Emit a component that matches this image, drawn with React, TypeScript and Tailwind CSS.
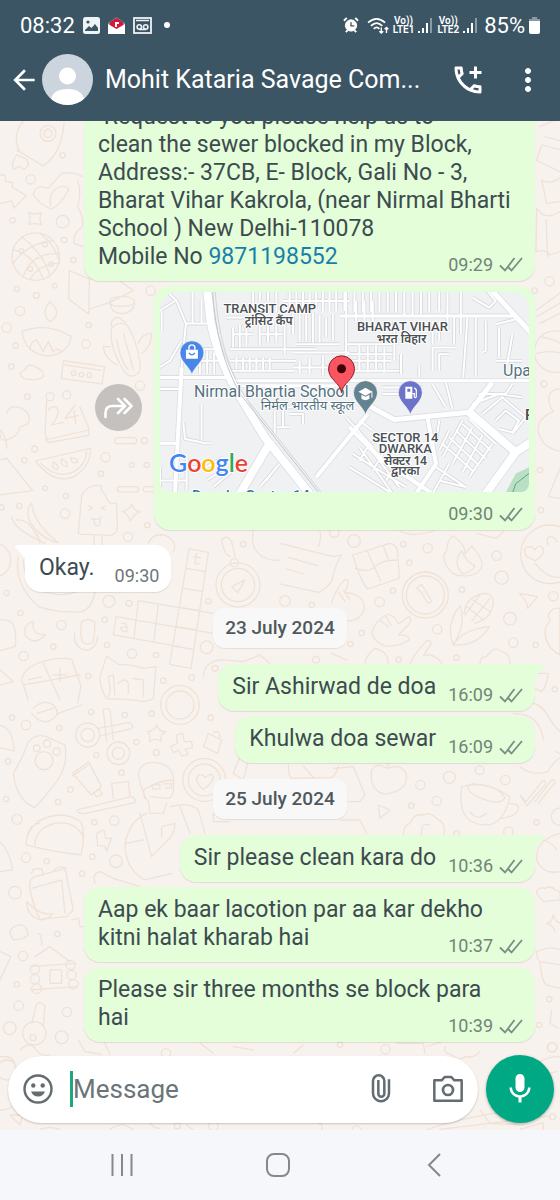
import type { ReactNode } from 'react';
import { MdArrowBack, MdMic, MdMoreVert, MdOutlineAddIcCall } from 'react-icons/md';

type Message = {
  text: string;
  time: string;
  phone?: string;
  incoming?: boolean;
  tail?: boolean;
  wide?: boolean;
};

// ===== Wallpaper =====
// each sheet is drawn at 3x and placed by its top left corner
const doodles = [
  {
    x: 0,
    y: 120,
    d: 'M60 95Q30 45 80-10M50 90L130 138Q185 100 192 10M50 105q-20 30-8 42l18-8 12 10 14-14-6-18zM0 165h15l2 20 20 2v15l42 25-38 38-5-22-36 8M100 225q5-35 45-20l40-45q40-5 62 10M100 225q20 30 55 42q25-10 52-60q-25-20-50 10q-10 15-5 40M86 278q18 8 38 0q-8 20 0 36q-20-6-38 0q8-18 0-36zM65 350Q130 400 150 468M120 340Q170 380 178 430M38 390Q100 400 130 478M40 430Q80 370 160 362M70 470Q90 400 178 400M90 478Q120 430 176 430M208 452l60 25-2 105-60-45zM268 477l72-10 60 45-70 35-60 20M330 545q0 35 38 36q35-5 36-36M330 545q0-15 36-15t38 15q0 12-38 14t-36-14zM66 635q75-30 148 15q-10 55-75 58q-65-10-73-73zM150 605q-30-25 0-60q40 35 0 60zM90 690q0-25 20-30l20 35 15-30 15 30q15-15 22 0M335 625q-10 50 35 125q10 20 30 18q25-5 20-40q-10-70-40-115q-30-10-45 12zM330 680h-20q0 30 40 55M425 700q30-20 30-60q-30 0-40 30M335 620q-5-20 15-28q10 0 25 15M350 660q10 60 35 90M370 640q15 50 30 110M190 722l124 18-8 52-122-16zM195 735l108 16M70 775q-20-15 5-25q10-25 32-8q25 5 22 28q-15 15-59 5zM232 180q15 40 0 80q20 30 15 60q-30 20-25 50l28 10',
    c: [[144, 40, 24], [144, 40, 12], [107, 410, 71], [64, 393, 7], [135, 374, 7], [153, 433, 7], [91, 447, 7], [38, 301, 8], [188, 305, 19], [192, 360, 8], [220, 420, 8], [92, 178, 14], [187, 106, 8], [164, 497, 7], [109, 526, 9], [60, 573, 14], [20, 623, 14], [47, 677, 8], [266, 616, 8], [258, 672, 13], [452, 512, 14], [34, 740, 8], [82, 830, 8], [420, 797, 14], [51, 507, 8], [221, 760, 7], [244, 764, 7], [268, 766, 7], [150, 830, 12], [200, 825, 12]],
  },
  {
    x: 0,
    y: 400,
    d: 'M140 0l-5 100 10 28 122-22-2-25-25-60M135 120l130-30M145 30q20-20 30 0q0 20-20 45l35-8M225 15l-30 40 40-8M222 30l5 40M20 40q10-30 45-15q30 15 20 45q-20 10-25 10q-5 30-35 38q-25 10-25-20M0 90q20 20 20 55M0 285L98 272 20 175 0 180M106 183L272 145q0 55-50 85q-60 25-116-47zM122 190q50 50 100 25q35-20 38-60M160 185q-8 20 12 24q8-10-12-24zM185 177q-5 22 15 22q8-10-15-22zM212 172q0 20 20 15q5-10-20-15zM235 400q5-60 10-115q20-35 60-28q-5 15 10 25q5 20 20 30q10-5 15 0l2 70q0 20-20 24l-75-3q-20 0-22-3zM282 408v30M306 408v30M265 318l12 5-10 8M318 318l-14 5 12 8M275 355q15 8 30-3M282 358q0 20 10 20q10 0 8-22M353 113h48a9 9 0 0 1 0 18h-48a9 9 0 0 1 0-18zM360 260h48a8 8 0 0 1 0 16h-48a8 8 0 0 1 0-16zM460 260h-22a8 8 0 0 0 0 16h22M395 312q5 20 26 24q-20 5-30 28q-5-20-24-30q22-3 28-22zM95 310q5 60 80 118q-50-10-85-60q-15-40 5-58zM35 350q5 30 60 60q30 15 40 20M50 360q30-5 50 30q20 25 20 40M55 470q-15 80 60 150q60 20 130 15q30-10 40-58M70 480q0 60 50 90q60 25 110 5M567 447l58 10-52 348-64-12zM558 505l58 10M549 565l58 9M540 622l60 10M528 680l60 10M518 738l60 10M415 602L640 640M348 650L640 700M340 705l200 35M415 602L402 715M475 612l-14 115M348 650l-8 55M580 470l22 4M590 460l-5 30q5 5 12 0M365 670q20-5 15 25q-20 0-18-12l18-2M690 470q-20-10-25-50q15-20 30 5q8 30 10 45M695 560l40-20-22 38zM760 390q-10 50 20 75q30 20 60 15M445 430q10-30 50-25q40 20 25 50M100 665q-30 5-25 40q25 35 62 0q-45 0-37-40zM245 665q20-12 38 0q5 10-4 60q-15 15-32 0q-8-20-2-60zM224 700q-5 40 30 50q30 5 40-40M0 660q40-5 45 30q5 40 0 50l-45 12M65 840q5-45 90-62q40-5 60 0l28 80-10 50M65 840l20 60M130 790l50 110M70 855q60-10 170-30M160 825h40M180 805v40M85 840l40-10M300 830l20-62 35 25q40 0 75 12l38-5-8 95q-20 15-60 5l-80-4q-20-30-20-66zM325 830q10 50 0 60M325 830l15-5 5 60M355 850q20-20 30 0v30M400 835l30 5v50M610 830q5-50 60-50l60 5 50-20 30 25M0 810l40 35-40 10',
    c: [[714, 555, 66], [714, 555, 50], [703, 488, 12], [104, 147, 9], [73, 181, 8], [317, 172, 14], [395, 195, 7], [303, 221, 8], [433, 122, 9], [440, 195, 8], [135, 265, 7], [198, 288, 8], [5, 322, 8], [58, 318, 8], [195, 341, 14], [442, 376, 8], [384, 411, 14], [20, 579, 8], [327, 604, 18], [387, 610, 9], [61, 639, 8], [314, 659, 8], [184, 675, 14], [321, 735, 8], [396, 761, 14], [468, 765, 8], [71, 768, 14], [265, 828, 8], [625, 604, 8], [620, 742, 19], [730, 433, 8], [160, 740, 8], [490, 842, 8], [575, 833, 8], [645, 805, 9], [-20, 480, 52]],
  },
  {
    x: 280,
    y: 520,
    d: 'M0 70l160 40 25-5q-20 30-30 80q-20 25-40 32l-115-25M25 112l88 25M18 147l54 15M120 35q5 20-5 45M218 105l110-35q20 0 25 25l5 80-95 32q-20-20-45-102zM225 145q40 15 60-5t65-20M262 93l40 90M310 78l15 40M410 205l15-12 30 50q-5 8-12 5l-20-32zM520 375q-25-60 20-118q20 55-20 118q25-45 108-55q-35 60-108 55zM552 280q5-50 60-60q30 0 28 30q-5 45-55 60M560 260l50 40M580 240l50 35M600 225l-45 60M630 235l-55 68M500 95q0-35 20-48q40 30 35 55l20-25q40 50 30 65q-15 30-60 25q-35 0-52-45q-5-25 7-27zM545 92q-30 40 5 70q30-10 35-25q-25-10-40-45M740 110q-15-25 5-30q15 0 20 10q10-20 25-5q5 20-25 37zM805 75q-10-20 5-25q15 0 20 15M765 130q50 60 90 35M718 220l55 10-30 35q0-20-25-45zM155 250q10-40 40-72q10 0 10 10l-10 30q30 0 50 20q15 30 0 45q-20 25-50 18M175 215l20 30M190 210l20 30M275 340q10-40 50-58q20 5 30 30l30-22q15 5 0 25l-30 30q35 0 33 15q-30 20-70 18q-30-5-43-38zM300 300l25 20M318 290l15 25M795 340q0-25 15-35l-5-20q10-25 35-20v140q-40-20-45-65zM600 430q0-20 20-20q20-35 45-15q25 5 25 35M390 430q15-30 50-68q20 0 10 15l-20 30q30-10 55 22M255 430q0-20 30-45q40 10 40 45M155 400l45 20M360 33q40 20 100 0M590 40l60 15 20-20M730 550q50-10 75 40q30 50 60 60M700 580q80 0 90 80M770 460h35q-5 40-20 55l-20-10M720 740q40 30 85 15q10-30 50-50l-30-10M320 745q-30-20-45 5q-8 50 25 68q20 8 35 0q45-10 45-50q-10-40-60-23zM320 745q0-8 8-15M25 735q0 35 10 40l120-2q15-10 20-35M70 738l30 35M160 745l60-5 35 85-15 20h-40M545 800q70-20 145 30q-20 90-80 85q-80-5-65-115zM565 808q-10-20 30-15q60 5 80 40q-10 20-50 10q-50-15-60-35M690 850q30 0 25 20q-10 20-50 25M570 875q20 30 50 5M720 825l18 20 50-62q12 0 8 10l-55 65zM765 845l50-65q12 0 10 8l-50 62M295 855l35 15-30 25z',
    c: [[436, 225, 69], [436, 225, 57], [810, 103, 88], [222, 63, 19], [370, 73, 8], [443, 85, 14], [388, 128, 8], [650, 107, 14], [665, 173, 20], [546, 209, 8], [299, 246, 14], [339, 212, 8], [15, 243, 16], [95, 255, 8], [690, 296, 19], [820, 229, 14], [245, 339, 8], [472, 328, 14], [211, 372, 8], [700, 368, 14], [767, 375, 8], [108, 419, 10], [529, 413, 8], [356, 419, 8], [824, 508, 8], [421, 795, 14], [508, 772, 18], [599, 751, 13], [676, 780, 14], [470, 843, 14], [394, 857, 8], [163, 38, 14]],
  },
  {
    x: 0,
    y: 700,
    d: 'M295 85l90-17q20 5 10 18l-95 22M310 30q10-10 20 0l10 90M310 30l10 95M95 40q40 50 80 0l70-25M100 25q30-30 60-10q15 15 10 30M110 40l50-15M470 75q5 20 28 20q-20 10-15 28q-20-10-35 2q5-18-5-30q20-3 27-20zM530 105l18-5 5 25h22l2 18-22 5 10 15-20 5-10-18-15 8-8-18 20-10zM625 100l40 20-12 40-42-20zM640 98q20-10 20 15M40 220q30-50 45-95q30-30 65-10l45 20q10 60-25 110q-30 40-65 78q-55-20-65-103zM218 220l48-35 38 75-30 25zM280 278l18-10 10 15-18 8zM218 228l46-33M232 330l160-40q20 5 12 18l-150 33q-22 0-22-11zM340 295l-5-45 50-5 5 45M440 300q-35-80-20-95q20-25 60-15q40 10 40 50q-40 0-80 25M520 240q5 50-15 55l-55-5M440 265q-15 0-5 30M455 255h25v12h-22zM490 252h25v12h-20M445 300l5 40h40l10-30M440 340q-50 20-65 90q0 80 60 110l80-20M510 320q60-15 85 10l20 70M420 340l35 130 50-50q20-20 20-50l-40 10v30M380 430l50-10M540 320l30 80M590 240q0-20 18-15l8 8q20-20 24 0q-5 20-30 35q-15-10-20-28zM78 435q0-40 35-70q70-40 130 0q15 40 0 100q-90-10-165-30zM105 435q0-50 60-65q60-10 85 40M80 415q10-45 40-45M290 400l22-10 5 25h18l-15 38-5-15h-22zM90 570q-5-35 15-40l75-20q20-10 20 20l20 100-20 20-80 8q-20-40-30-88zM95 565l90-25 10 100M95 520l5-12 25-2 5 20M160 515q10-20 40-10M80 605q0 40 40 55q25 0 38-20q-20 5-40-5q-20-10-38-30zM30 700q0-20 30-25q20 0 25 30q-20 15-45 15zM105 770l45-30 60 45M92 800l135-10M92 870l140-10M150 810h35v40h-35zM95 970l15-58q15-8 25 5l-5 60M0 75q40 10 42 78l-42-10M0 425q30 30 38 85l-38 5M0 755l32 15-32 70M285 550q-10-30 15-35l40 20 80 25M215 660l20-5 5 25 15 0M115 700q15 5 5 15q10 10 5 20M720 170l-20 50 30 20 15-60M640 340v25h50',
    c: [[263, 105, 36], [263, 105, 20], [355, 160, 34], [355, 160, 18], [540, 15, 58], [540, 15, 42], [132, 182, 27], [110, 145, 10], [141, 131, 11], [170, 155, 11], [613, 240, 64], [613, 240, 48], [105, 808, 14], [105, 838, 14], [110, 866, 15], [212, 795, 14], [215, 825, 14], [220, 853, 14], [103, 1000, 35], [99, 1013, 9], [36, 53, 8], [78, 75, 14], [178, 84, 8], [273, 36, 8], [374, 45, 8], [455, 41, 8], [409, 126, 8], [289, 166, 8], [469, 158, 9], [632, 53, 8], [24, 184, 8], [365, 218, 8], [211, 269, 8], [18, 297, 8], [174, 306, 8], [51, 358, 15], [283, 367, 8], [343, 362, 14], [78, 473, 14], [140, 484, 8], [277, 470, 8], [348, 484, 19], [246, 521, 8], [45, 578, 19], [172, 702, 8], [69, 768, 14], [50, 853, 8], [56, 917, 14], [201, 936, 14], [29, 985, 19], [185, 1012, 19]],
  },
  {
    x: 440,
    y: 120,
    d: 'M300 20l45-20M290 120l15-45 60 15M288 120l72 35M305 180q25 15 55-5M305 180l15 70 40-5M290 265q20 30 50 20l20-10M290 265l-2 130q30-10 40 10l32-10M318 300l5 110M300 650q50 10 60 20M290 700q40-10 75 0M290 570l70-50M290 590l70-40M300 610l60-30M330 820q20-20 40-10M330 820q-10 30 10 55q-50 20-45 60q10 50 70 60M360 1045l-35 85 35 5M315 50l45 12',
    c: [[345, 695, 62], [329, 484, 14], [284, 512, 8], [312, 792, 9], [300, 1050, 8], [303, 1170, 8]],
  },
  {
    x: 280,
    y: 760,
    d: 'M370 225q0-30 20-35q10-30 40-25q20-10 40 10q30 15 22 50M425 225q-5-40 25-30M770 300q-5-60 70-80M770 300q20 45 70 35M790 240q30 10 40 30M770 400q0-20 25-15q20-10 30 5q20 0 15 30l-50 5zM770 575q40-20 70-5M770 575q0 20 10 30q5 60 20 70l40 10M780 605l60 10M820 465q5 20 20 24M800 490q15 0 20-25M800 490q20 5 25 25M815 750l-5 40 25 15M60 100l20 60-40 10M180 180l60 0 20 40',
    c: [[808, 718, 8], [815, 862, 14], [778, 795, 8], [770, 187, 8], [685, 215, 14], [530, 220, 8], [840, 170, 26]],
  },
  {
    x: 0,
    y: 1040,
    d: 'M0 50q50-5 45 40M0 210q40 0 60-40M30 225l30 30 8-30zM60 30q30-30 50 0q10 20 40 15M235 0l20 35 50 8M310 0l20 42M120 268q30-10 60 0M330 268q30-20 50-10l20 10M600 10l40 30M700 20l60 10M480 265q-20 0-30-18M560 255l20 15M1280 20l60-20',
    c: [[20, 90, 30], [498, 40, 14], [532, 258, 9], [640, 258, 14]],
  },
  {
    x: 280,
    y: 1040,
    d: 'M440 270q100-40 370-75M480 268l330-40M350 10l80 0 5 30M495 20q-5 20 20 25q20 20 40 5q30 5 45-15M600 210l30 40 100 5M760 90q20-40 80-40M770 110l60-15M115 250q15 0 10 20M40 40l30-25M720 268l70-20v20',
    c: [[317, 28, 14], [180, 14, 8], [818, 230, 9], [230, 272, 14], [818, 22, 14], [500, 232, 9]],
  },
];

function Wallpaper() {
  return (
    <svg viewBox="0 121 560 1009" preserveAspectRatio="xMinYMin slice" aria-hidden="true" className="absolute inset-0 h-full w-full">
      <g fill="none" stroke="#f0e1d6" strokeWidth="3.8" strokeLinecap="round" strokeLinejoin="round">
        {doodles.map((s, i) => (
          <g key={i} transform={`translate(${s.x} ${s.y}) scale(0.3333)`}>
            <path d={s.d} />
            {s.c.map(([cx, cy, r], j) => (
              <circle key={j} cx={cx} cy={cy} r={r} />
            ))}
          </g>
        ))}
      </g>
    </svg>
  );
}

// ===== Location preview =====
const lanes =
  'M27 90L75 60M50 30L80 60 108 128H190M108 128L95 260M128 30v95M155 60v65M35 90v60M27 260L60 240 95 180M150 205v75M172 210v70M193 215v65M150 240h60M150 205h55M230 110h80V30M235 80h75M330 60V30M355 60V30M380 95V30M250 160h60M250 140v60M270 130v70M290 140v55M330 130v65M355 125v60M380 130v55M405 120v100M330 160h70M240 205h260M260 225v40M280 230v40M300 230v40M320 230v40M340 230v40M360 230v40M240 240h200M245 270h190M430 100v60M450 90v90M470 100v80M490 95v90M510 100v85M530 110v60M550 100v80M430 215h170M440 190h130M450 240v40M480 230v50M520 225v60M430 260h110M400 60h200M420 30v60M440 30v50M460 30v50M480 30v60M500 30v50M520 30v60M540 30v60M560 30v60M585 30v60M375 390v70M400 380v60M420 400h40v30M360 380h90M380 440h40M100 425l5 50 50 10M155 370v110M155 488h30M27 600h80M30 560v60M110 560h60l50-30M110 530v100M170 600l60-40M190 620l70-60M330 620l60-70M350 600l30-40M590 60v240M620 60v60M645 60v60M670 60v60M27 325h65';
const lanesEast =
  'M20 30v65M45 30v65M70 30v65M95 30v65M120 30v65M145 30v65M170 30v65M195 30v75M220 30v75M245 30v70M270 35v60M300 30v60M325 35v110M345 110v80M365 30v130M400 50l50 30 20-20-25-30M20 190h140M20 220h140M35 240h120M60 190v80M85 195v80M110 190v80M135 200v75M165 240V120M185 280v-60M240 250v40M280 120v70M300 120v60M350 200h-70v70M330 220h-30v50M385 110L372 290M410 110v175M440 120v90l-10 5M480 140v90M520 160l-15 90M470 130l60-15M470 240h80M10 270h170M130 320h120M130 340h110M280 310l40 70M320 305l20 80M420 340h80l20-30M400 370l80-30 70 10M430 400l60-50 70 60-40 50M470 420l30-30 40 30-20 35-40-10M300 420l-10 70M310 490l90 80M330 470l90 85M350 450l90 85M370 430l85 80M390 415l80 75M330 450l-30 60M370 420l-60 110M400 440l-60 110M430 465l-60 110M460 490l-70 100M290 560l90 60M300 600l80 20M330 550l-50 90M60 500l100 140M90 500l90 120M40 520l160 100M30 560l130 80M60 540l30-50M100 570l30-50M140 600l40-60M60 420l40 30M20 410l80 90';
const streets = [
  { d: 'M27 290H235M27 488h60M245 300h930M245 315h330M570 105h525', w: 9 },
  { d: 'M95 260L75 640M500 590L655 400M600 440L700 540 850 640M835 410L860 550 800 640', w: 12 },
  { d: 'M640 365L735 417 960 395 1030 305M1030 30L1145 155', w: 15 },
  { d: 'M172 30L182 120Q200 220 260 330L345 470 480 640', w: 24 },
  { d: 'M960 395L1100 515 1010 640M1100 515l45-30M365 480L270 640', w: 24 },
];

const hindi = '"Noto Sans Devanagari", "Noto Sans", sans-serif';

function MapPin({ x, y, color, children }: { x: number; y: number; color: string; children?: ReactNode }) {
  return (
    <g transform={`translate(${x} ${y})`}>
      <path d="M0 0C-2-8-12-13-12-22a12 12 0 0 1 24 0C12-13 2-8 0 0z" fill={color} stroke="#fff" strokeWidth="0.6" />
      {children}
    </g>
  );
}

function LocationMap() {
  return (
    <svg viewBox="160 291 370 201" role="img" aria-label="Map" className="block w-full rounded-t-2xl rounded-b-lg" fontFamily="Roboto, sans-serif">
      <rect x="160" y="291" width="370" height="201" fill="#eff1f3" />
      <g transform="translate(150 280) scale(0.3333)" fill="none" strokeLinejoin="round">
        <path d="M1068 640l32-60 45-22v90z" fill="#b9dfc4" />
        <path d="M1090 640l10-30 45-35" stroke="#5fa777" strokeWidth="3" />
        <g stroke="#d6d9dd" strokeWidth="11">
          <path d={lanes} />
          <path d={lanesEast} transform="translate(570 0)" />
        </g>
        {streets.map((s) => (
          <path key={s.d} d={s.d} stroke="#dcdfe2" strokeWidth={s.w + 5} />
        ))}
        <g stroke="#fff" strokeWidth="6">
          <path d={lanes} />
          <path d={lanesEast} transform="translate(570 0)" />
        </g>
        {streets.map((s) => (
          <path key={s.d} d={s.d} stroke="#fff" strokeWidth={s.w} />
        ))}
        <path d="M188 30Q200 220 275 345L510 640" stroke="#c3c6ca" strokeWidth="3" />
        <path d="M196 30Q208 220 283 345L518 640" stroke="#c3c6ca" strokeWidth="2" />
      </g>

      <MapPin x={192} y={374} color="#4a86e8">
        <path d="M-6-25h12v9h-12z" fill="#fff" />
        <path d="M-3-25v-2a3 3 0 0 1 6 0v2" fill="none" stroke="#fff" strokeWidth="1.4" />
        <path d="M-3-22q3 4 6 0" fill="none" stroke="#4a86e8" strokeWidth="1.3" />
      </MapPin>

      <g textAnchor="middle" fill="#4b4f54" stroke="#fff" strokeWidth="2" paintOrder="stroke" fontSize="13" fontWeight="500">
        <text x="270" y="312">TRANSIT CAMP</text>
        <text x="269" y="324" fontSize="12" fontWeight="600" fontFamily={hindi}>ट्रांसिट कैंप</text>
        <text x="403" y="330">BHARAT VIHAR</text>
        <text x="402" y="342" fontSize="12" fontWeight="600" fontFamily={hindi}>भरत विहार</text>
        <text x="406" y="441">SECTOR 14</text>
        <text x="406" y="452">DWARKA</text>
        <text x="406" y="464" fontSize="12" fontWeight="600" fontFamily={hindi}>सेक्टर 14</text>
        <text x="406" y="475" fontSize="12" fontWeight="600" fontFamily={hindi}>द्वारका</text>
      </g>
      <g fill="#54717f" stroke="#fff" strokeWidth="2" paintOrder="stroke">
        <text x="194" y="396" fontSize="16">Nirmal Bhartia School</text>
        <text x="261" y="409" fontSize="13" fontFamily={hindi}>निर्मल भारतीय स्कूल</text>
        <text x="504" y="375" fontSize="16">Upa</text>
        <text x="192" y="501" fontSize="15" fontWeight="500" fill="#2f74a8">Dwarka Sector 14</text>
        <text x="526" y="419" fontSize="15" fontWeight="600" fill="#4b4f54">P</text>
      </g>

      <MapPin x={366} y={414} color="#64828f">
        <path d="M-7-23l7-4 7 4-7 4z" fill="#fff" />
        <path d="M-4-20v4q4 3 8 0v-4l-4 2z" fill="#fff" />
        <path d="M6.500-23v6" stroke="#fff" />
      </MapPin>
      <MapPin x={411} y={414} color="#6b74c9">
        <path d="M-5-28h7v12h-7z" fill="#fff" />
        <path d="M-3-26h3v3h-3z" fill="#6b74c9" />
        <path d="M2-21h2v3q1 2 2 0v-7l-2-2" fill="none" stroke="#fff" strokeWidth="1.2" />
      </MapPin>
      <path d="M342 392c-1-10-13-13-13-24a13 13 0 0 1 26 0c0 11-12 14-13 24z" fill="#fb5561" stroke="#8f1d27" />
      <circle cx="342" cy="368" r="4.500" fill="#3d0308" />

      <text x="169" y="472" fontFamily='"Lato", sans-serif' fontWeight="600" fontSize="25" stroke="#fff" strokeWidth="2" paintOrder="stroke">
        <tspan fill="#4285f4">G</tspan>
        <tspan fill="#ea4335">o</tspan>
        <tspan fill="#fbbc05">o</tspan>
        <tspan fill="#4285f4">g</tspan>
        <tspan fill="#34a853">l</tspan>
        <tspan fill="#ea4335">e</tspan>
      </text>
    </svg>
  );
}

// ===== Chat parts =====
function Ticks() {
  return (
    <svg width="24" height="15" viewBox="0 0 24 15" fill="none" stroke="#7b8d84" strokeWidth="1.800" aria-label="Delivered">
      <path d="M1 8.500l5 5L15.500 1M8.500 9.500l4 4L23 1" />
    </svg>
  );
}

function Meta({ time, incoming }: { time: string; incoming?: boolean }) {
  return (
    <span className={`flex items-center gap-1.5 text-lg leading-5 ${incoming ? 'text-[#6f7679]' : 'text-[#708577]'}`}>
      <time>{time}</time>
      {!incoming && <Ticks />}
    </span>
  );
}

function Bubble({ text, time, phone, incoming, tail, wide }: Message) {
  return (
    <div
      className={`relative max-w-[451px] rounded-2xl pt-[9px] pb-2.5 pl-3.5 pr-3 shadow-[0_1px_1px_rgba(0,0,0,0.1)] ${
        incoming ? 'self-start rounded-tl-none bg-white' : 'self-end bg-[#e3fed8]'
      } ${tail && !incoming ? 'rounded-tr-none' : ''} ${wide ? 'w-full' : ''}`}
    >
      {tail && (
        <svg
          width="11"
          height="14"
          viewBox="0 0 11 14"
          className={`absolute top-0 ${incoming ? '-left-2.5 -scale-x-100 fill-white' : '-right-2.5 fill-[#e3fed8]'}`}
        >
          <path d="M0 0h9q3 1 1 3L0 14z" />
        </svg>
      )}
      <p className="text-[23px] leading-7 whitespace-pre-wrap text-[#3d4b50]">
        {text}
        {phone && (
          <a href={`tel:${phone}`} className="text-[#1a7fa8]">
            {phone}
          </a>
        )}
        {/* drops to the foot of the last line */}
        <span className={`float-right mt-3 -mb-1 ${incoming ? 'ml-5' : 'ml-3'}`}>
          <Meta time={time} incoming={incoming} />
        </span>
      </p>
    </div>
  );
}

function DateChip({ children }: { children: ReactNode }) {
  return (
    <div className="my-[11px] self-center rounded-xl bg-[#f8f8f9] px-3 py-1.5 text-[19px] leading-7 font-medium text-[#4f585c] shadow-[0_1px_1px_rgba(0,0,0,0.08)]">
      {children}
    </div>
  );
}

function Signal() {
  return (
    <svg width="15" height="17" viewBox="0 0 15 17" fill="#fff">
      <path d="M0 14h2v2H0zM4 11h2v5H4zM8 6h2v10H8z" />
      <path d="M12 1h2v15h-2z" opacity=".4" />
    </svg>
  );
}

function Volte({ n }: { n: number }) {
  return (
    <div className="text-center text-[10px] leading-[9px] font-semibold">
      <div>Vo))</div>
      <div>LTE{n}</div>
    </div>
  );
}

function StatusBar() {
  return (
    <div className="flex h-[50px] items-center justify-between px-5 text-white">
      <div className="flex items-center gap-2">
        <span className="text-[22px]">08:32</span>
        <svg width="17" height="17" viewBox="0 0 17 17">
          <rect width="17" height="17" rx="2.500" fill="#eef3f6" />
          <circle cx="5" cy="5" r="1.600" fill="#3c5564" />
          <path d="M2 13l4-4 2.500 2 3.500-4 3 4v3H2z" fill="#3c5564" />
        </svg>
        <svg width="17" height="17" viewBox="0 0 17 17">
          <path d="M0 6l8.500-6L17 6v5H0z" fill="#7f8890" />
          <path d="M2 5l6.500-4L15 5v5l-6.500 4L2 10z" fill="#d4193a" />
          <path d="M0 7l8.500 5L17 7v10H0z" fill="#fff" />
          <path d="M7 5h4v2H9v3H7z" fill="#fff" />
        </svg>
        <svg width="19" height="17" viewBox="0 0 19 17" fill="none" stroke="#eef3f6">
          <rect x="1" y="1" width="17" height="15" strokeWidth="1.800" />
          <path d="M3 3.500h13" strokeWidth="1.500" />
          <circle cx="6.300" cy="10" r="2.200" strokeWidth="1.600" />
          <circle cx="12.700" cy="10" r="2.200" strokeWidth="1.600" />
          <path d="M6 12.500h7" strokeWidth="1.500" />
        </svg>
        <span className="ml-1 size-1.5 rounded-full bg-white" />
      </div>
      <div className="flex items-center gap-1">
        <svg width="16" height="16" viewBox="0 0 17 17" fill="none" stroke="#fff">
          <circle cx="8.500" cy="9" r="6" fill="#fff" />
          <path d="M1 4l3-3M16 4l-3-3M3 16l2-2M14 16l-2-2" strokeWidth="2" />
          <path d="M8.500 5.500V9.500H12" stroke="#3c5564" strokeWidth="1.400" />
        </svg>
        <svg width="22" height="17" viewBox="0 0 23 18" fill="none" stroke="#fff" strokeWidth="1.900" className="ml-1">
          <path d="M1 6q9-8 18 0M4 9.500q6-6 12 0M7 12.500q3-3 6 0" />
          <path d="M15 11v6M13 15l2 2 2-2M20.500 17v-6M18.500 13l2-2 2 2" strokeWidth="1.500" />
        </svg>
        <Volte n={1} />
        <Signal />
        <Volte n={2} />
        <Signal />
        <span className="ml-0.5 text-[22px]">85%</span>
        <svg width="11" height="17" viewBox="0 0 11 17" fill="#fff">
          <path d="M3 0h5v2h3v3H0V2h3z" opacity=".4" />
          <path d="M0 4h11v11q0 2-2 2H2q-2 0-2-2z" />
        </svg>
      </div>
    </div>
  );
}

export default function App() {
  return (
    <div className="flex h-dvh flex-col font-['Roboto',sans-serif]">
      <header className="shrink-0 bg-[#3c5564] text-white">
        <StatusBar />
        <div className="flex items-center pt-1 pr-3.5 pb-4 pl-2">
          <button type="button" aria-label="Back">
            <MdArrowBack className="size-8" />
          </button>
          <svg viewBox="0 0 51 51" className="ml-0.5 size-[51px] rounded-full" aria-hidden="true">
            <rect width="51" height="51" fill="#ccd5de" />
            <circle cx="25.500" cy="22" r="8.500" fill="#fff" />
            <path d="M8 48q2-13 17.500-13T43 48v3H8z" fill="#fff" />
          </svg>
          <h1 className="ml-3 min-w-0 flex-1 truncate text-[25px] leading-8">Mohit Kataria Savage Com...</h1>
          <button type="button" aria-label="Add call">
            <MdOutlineAddIcCall className="size-9" />
          </button>
          <button type="button" aria-label="More options" className="ml-6">
            <MdMoreVert className="size-9" />
          </button>
        </div>
      </header>

      <main className="relative flex min-h-0 flex-1 flex-col bg-[#f7f2ed]">
        <Wallpaper />
        <div className="relative flex min-h-0 flex-1 flex-col justify-end gap-[5px] overflow-hidden px-[25px] pb-[13px]">
          <Bubble
            text={' Request to you please help us to\nclean the sewer blocked in my Block,\nAddress:- 37CB, E- Block, Gali No - 3,\nBharat Vihar Kakrola, (near Nirmal Bharti\nSchool ) New Delhi-110078\nMobile No '}
            phone="9871198552"
            time="09:29"
            wide
          />
          <div className="flex items-center justify-end gap-3">
            <button type="button" aria-label="Forward" className="flex size-[47px] shrink-0 items-center justify-center rounded-full bg-[#c4c1be]">
              <svg width="29" height="22" viewBox="0 0 29 22" fill="none" stroke="#fff" strokeWidth="2.600" strokeLinecap="round" strokeLinejoin="round">
                <path d="M1.500 20v-4q0-7 7-7h12M14 2l7 7-7 7M20.500 2l7 7-7 7" />
              </svg>
            </button>
            <div className="flex w-full max-w-[381px] flex-col rounded-2xl bg-[#e3fed8] px-1.5 pt-1.5 shadow-[0_1px_1px_rgba(0,0,0,0.1)]">
              <LocationMap />
              <div className="self-end px-1.5 pt-3 pb-1.5">
                <Meta time="09:30" />
              </div>
            </div>
          </div>
          <div className="mt-2.5 flex flex-col">
            <Bubble text="Okay." time="09:30" incoming tail />
          </div>
          <DateChip>23 July 2024</DateChip>
          <Bubble text="Sir Ashirwad de doa" time="16:09" tail />
          <Bubble text="Khulwa doa sewar" time="16:09" />
          <DateChip>25 July 2024</DateChip>
          <Bubble text="Sir please clean kara do" time="10:36" tail />
          <Bubble text={'Aap ek baar lacotion par aa kar dekho\nkitni halat kharab hai'} time="10:37" wide />
          <Bubble text={'Please sir three months se block para\nhai'} time="10:39" wide />
        </div>

        <form className="relative flex items-center gap-2 pr-1.5 pb-[7px] pl-2">
          <div className="flex h-[67px] min-w-0 flex-1 items-center rounded-full bg-white px-3.5 shadow-[0_1px_2px_rgba(0,0,0,0.2)]">
            <button type="button" aria-label="Emoji">
              <svg width="32" height="32" viewBox="0 0 32 32" fill="none" stroke="#626c71" strokeWidth="2.400">
                <circle cx="16" cy="16" r="13.500" />
                <circle cx="11.300" cy="12.500" r="2.200" fill="#626c71" stroke="none" />
                <circle cx="20.700" cy="12.500" r="2.200" fill="#626c71" stroke="none" />
                <path d="M9 18.500h14q-2 5-7 5t-7-5z" fill="#626c71" stroke="none" />
              </svg>
            </button>
            <span className="ml-4 h-9 w-[3px] shrink-0 bg-[#1fa583]" />
            <input
              type="text"
              aria-label="Message"
              placeholder="Message"
              className="min-w-0 flex-1 bg-transparent text-[26px] leading-8 text-[#3d4b50] outline-none placeholder:text-[#6b7579]"
            />
            <button type="button" aria-label="Attach">
              <svg width="30" height="32" viewBox="255 99 90 96" fill="none" stroke="#626c71" strokeWidth="7.500">
                <path d="M324 118v42a24 24 0 0 1-48 0v-37a17 17 0 0 1 34 0v38a9 9 0 0 1-18 0v-41" />
              </svg>
            </button>
            <button type="button" aria-label="Camera" className="ml-9">
              <svg width="32" height="32" viewBox="455 102 96 96" fill="none" stroke="#626c71" strokeWidth="7.500" strokeLinejoin="round">
                <path d="M462 124h22l9-10h20l9 10h22v61h-82z" />
                <circle cx="503" cy="153" r="15" strokeWidth="8" />
              </svg>
            </button>
          </div>
          <button
            type="button"
            aria-label="Voice message"
            className="flex size-[68px] shrink-0 items-center justify-center rounded-full bg-[#00a884] text-white shadow-[0_1px_3px_rgba(0,0,0,0.3)]"
          >
            <MdMic className="size-9" />
          </button>
        </form>
      </main>

      <nav className="grid h-[70px] shrink-0 grid-cols-3 items-center justify-items-center bg-[#f6f7fa] pr-12 pl-11">
        <button type="button" aria-label="Recents">
          <svg width="22" height="24" viewBox="0 0 22 24" stroke="#85888c" strokeWidth="2">
            <path d="M1.500 1v22M11 1v22M20.500 1v22" />
          </svg>
        </button>
        <button type="button" aria-label="Home">
          <svg width="24" height="24" viewBox="0 0 24 24" fill="none" stroke="#85888c" strokeWidth="2">
            <rect x="1" y="1" width="22" height="22" rx="7" />
          </svg>
        </button>
        <button type="button" aria-label="Go back">
          <svg width="14" height="24" viewBox="0 0 14 24" fill="none" stroke="#85888c" strokeWidth="2">
            <path d="M13 1L2 12l11 11" />
          </svg>
        </button>
      </nav>
    </div>
  );
}
